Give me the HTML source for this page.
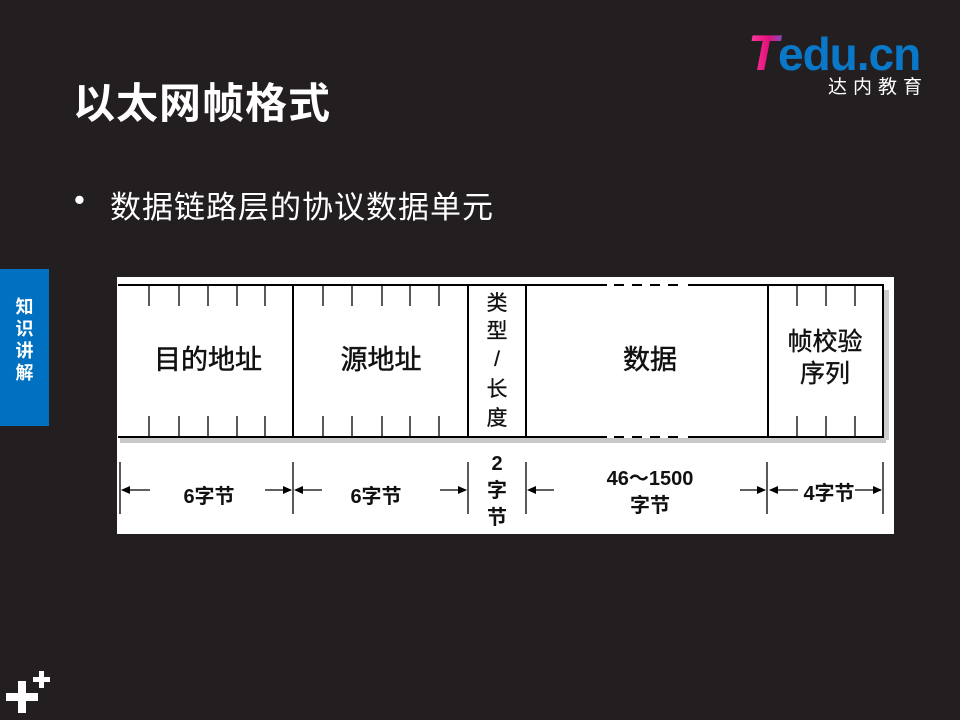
<!DOCTYPE html>
<html><head><meta charset="utf-8"><style>
body{margin:0;width:960px;height:720px;background:#231f20;position:relative;overflow:hidden;font-family:"Liberation Sans","Noto Sans CJK SC",sans-serif}
.t{position:absolute;left:73px;top:70px;color:#fff;font-size:42px;font-weight:bold;letter-spacing:1px}
.b{position:absolute;left:74px;top:182px;color:#fff;font-size:31px}
.b span{position:absolute;left:36px;top:0;white-space:nowrap;letter-spacing:1px}
.side{position:absolute;left:0;top:269px;width:49px;height:157px;background:#0070c0;color:#fff;font-weight:bold;font-size:18px;line-height:22px;text-align:center;padding-top:27px;box-sizing:border-box}
</style></head><body>
<div class="t">以太网帧格式</div>
<div class="b">•<span>数据链路层的协议数据单元</span></div>
<div class="side">知<br>识<br>讲<br>解</div>
<svg style="position:absolute;left:748px;top:28px" width="190" height="70">
<defs><linearGradient id="g" x1="0" x2="1"><stop offset="0" stop-color="#ff3fa0"/><stop offset="0.6" stop-color="#e0107a"/><stop offset="1" stop-color="#8050c0"/></linearGradient></defs>
<text x="0" y="42" font-family="Liberation Sans" font-weight="bold" font-style="italic" font-size="50" fill="url(#g)">T</text>
<text x="30" y="42" font-family="Liberation Sans" font-weight="bold" font-size="46" fill="#0a78c8" letter-spacing="-1">edu.cn</text>
<text x="80" y="65" font-family="Noto Sans CJK SC" font-size="19" fill="#fff" letter-spacing="6">达内教育</text>
</svg>
<svg style="position:absolute;left:0;top:0" width="960" height="720">
<rect x="117" y="277" width="777" height="257" fill="#fff"/>
<rect x="120" y="438" width="766" height="5" fill="#c8c8c8"/>
<rect x="883" y="290" width="6" height="150" fill="#ccc"/>
<g stroke="#000" stroke-width="2" fill="none">
<path d="M118 285H607M688 285H883V437H688M607 437H118Z"/>
<path d="M293 285V437M468 285V437M526 285V437M768 285V437"/>
<path d="M614 285h10M632 285h10M650 285h10M668 285h10M614 437h10M632 437h10M650 437h10M668 437h10"/>
</g>
<g stroke="#000" stroke-width="1.3">
<path d="M149 286v20M179 286v20M208 286v20M237 286v20M265 286v20M323 286v20M352 286v20M382 286v20M410 286v20M439 286v20M797 286v20M826 286v20M855 286v20"/>
<path d="M149 416v20M179 416v20M208 416v20M237 416v20M265 416v20M323 416v20M352 416v20M382 416v20M410 416v20M439 416v20M797 416v20M826 416v20M855 416v20"/>
<path d="M120 462v52M293 462v52M468 462v52M526 462v52M767 462v52M883 462v52"/>
<path d="M122 490h28M265 490h26M296 490h26M440 490h26M529 490h25M740 490h25M770 490h28M855 490h26"/>
</g>
<g fill="#000"><path d="M121 490l9-4v8zM292 490l-9-4v8zM294 490l9-4v8zM467 490l-9-4v8zM527 490l9-4v8zM766 490l-9-4v8zM769 490l9-4v8zM882 490l-9-4v8z"/></g>
<g font-family="Liberation Sans,Noto Sans CJK SC,sans-serif" fill="#111" text-anchor="middle">
<text x="208" y="369" font-size="27" stroke="#111" stroke-width="0.5">目的地址</text>
<text x="381" y="369" font-size="27" stroke="#111" stroke-width="0.5">源地址</text>
<text x="650" y="369" font-size="27" stroke="#111" stroke-width="0.5">数据</text>
<text x="825" y="350" font-size="25" stroke="#111" stroke-width="0.4">帧校验</text>
<text x="825" y="382" font-size="25" stroke="#111" stroke-width="0.4">序列</text>
<g font-size="21" stroke="#111" stroke-width="0.3"><text x="497" y="310">类</text><text x="497" y="338">型</text><text x="497" y="366">/</text><text x="497" y="396">长</text><text x="497" y="425">度</text></g>
<g font-size="20" font-weight="bold"><text x="209" y="503">6字节</text><text x="376" y="503">6字节</text><text x="497" y="470">2</text><text x="497" y="497">字</text><text x="497" y="524">节</text><text x="650" y="485">46～1500</text><text x="650" y="512">字节</text><text x="829" y="500">4字节</text></g>
</g>
<g fill="#fff"><rect x="6" y="693" width="32" height="8"/><rect x="18" y="681" width="8" height="32"/><rect x="33" y="677" width="17" height="5"/><rect x="39" y="671" width="5" height="17"/></g>
</svg>
</body></html>
